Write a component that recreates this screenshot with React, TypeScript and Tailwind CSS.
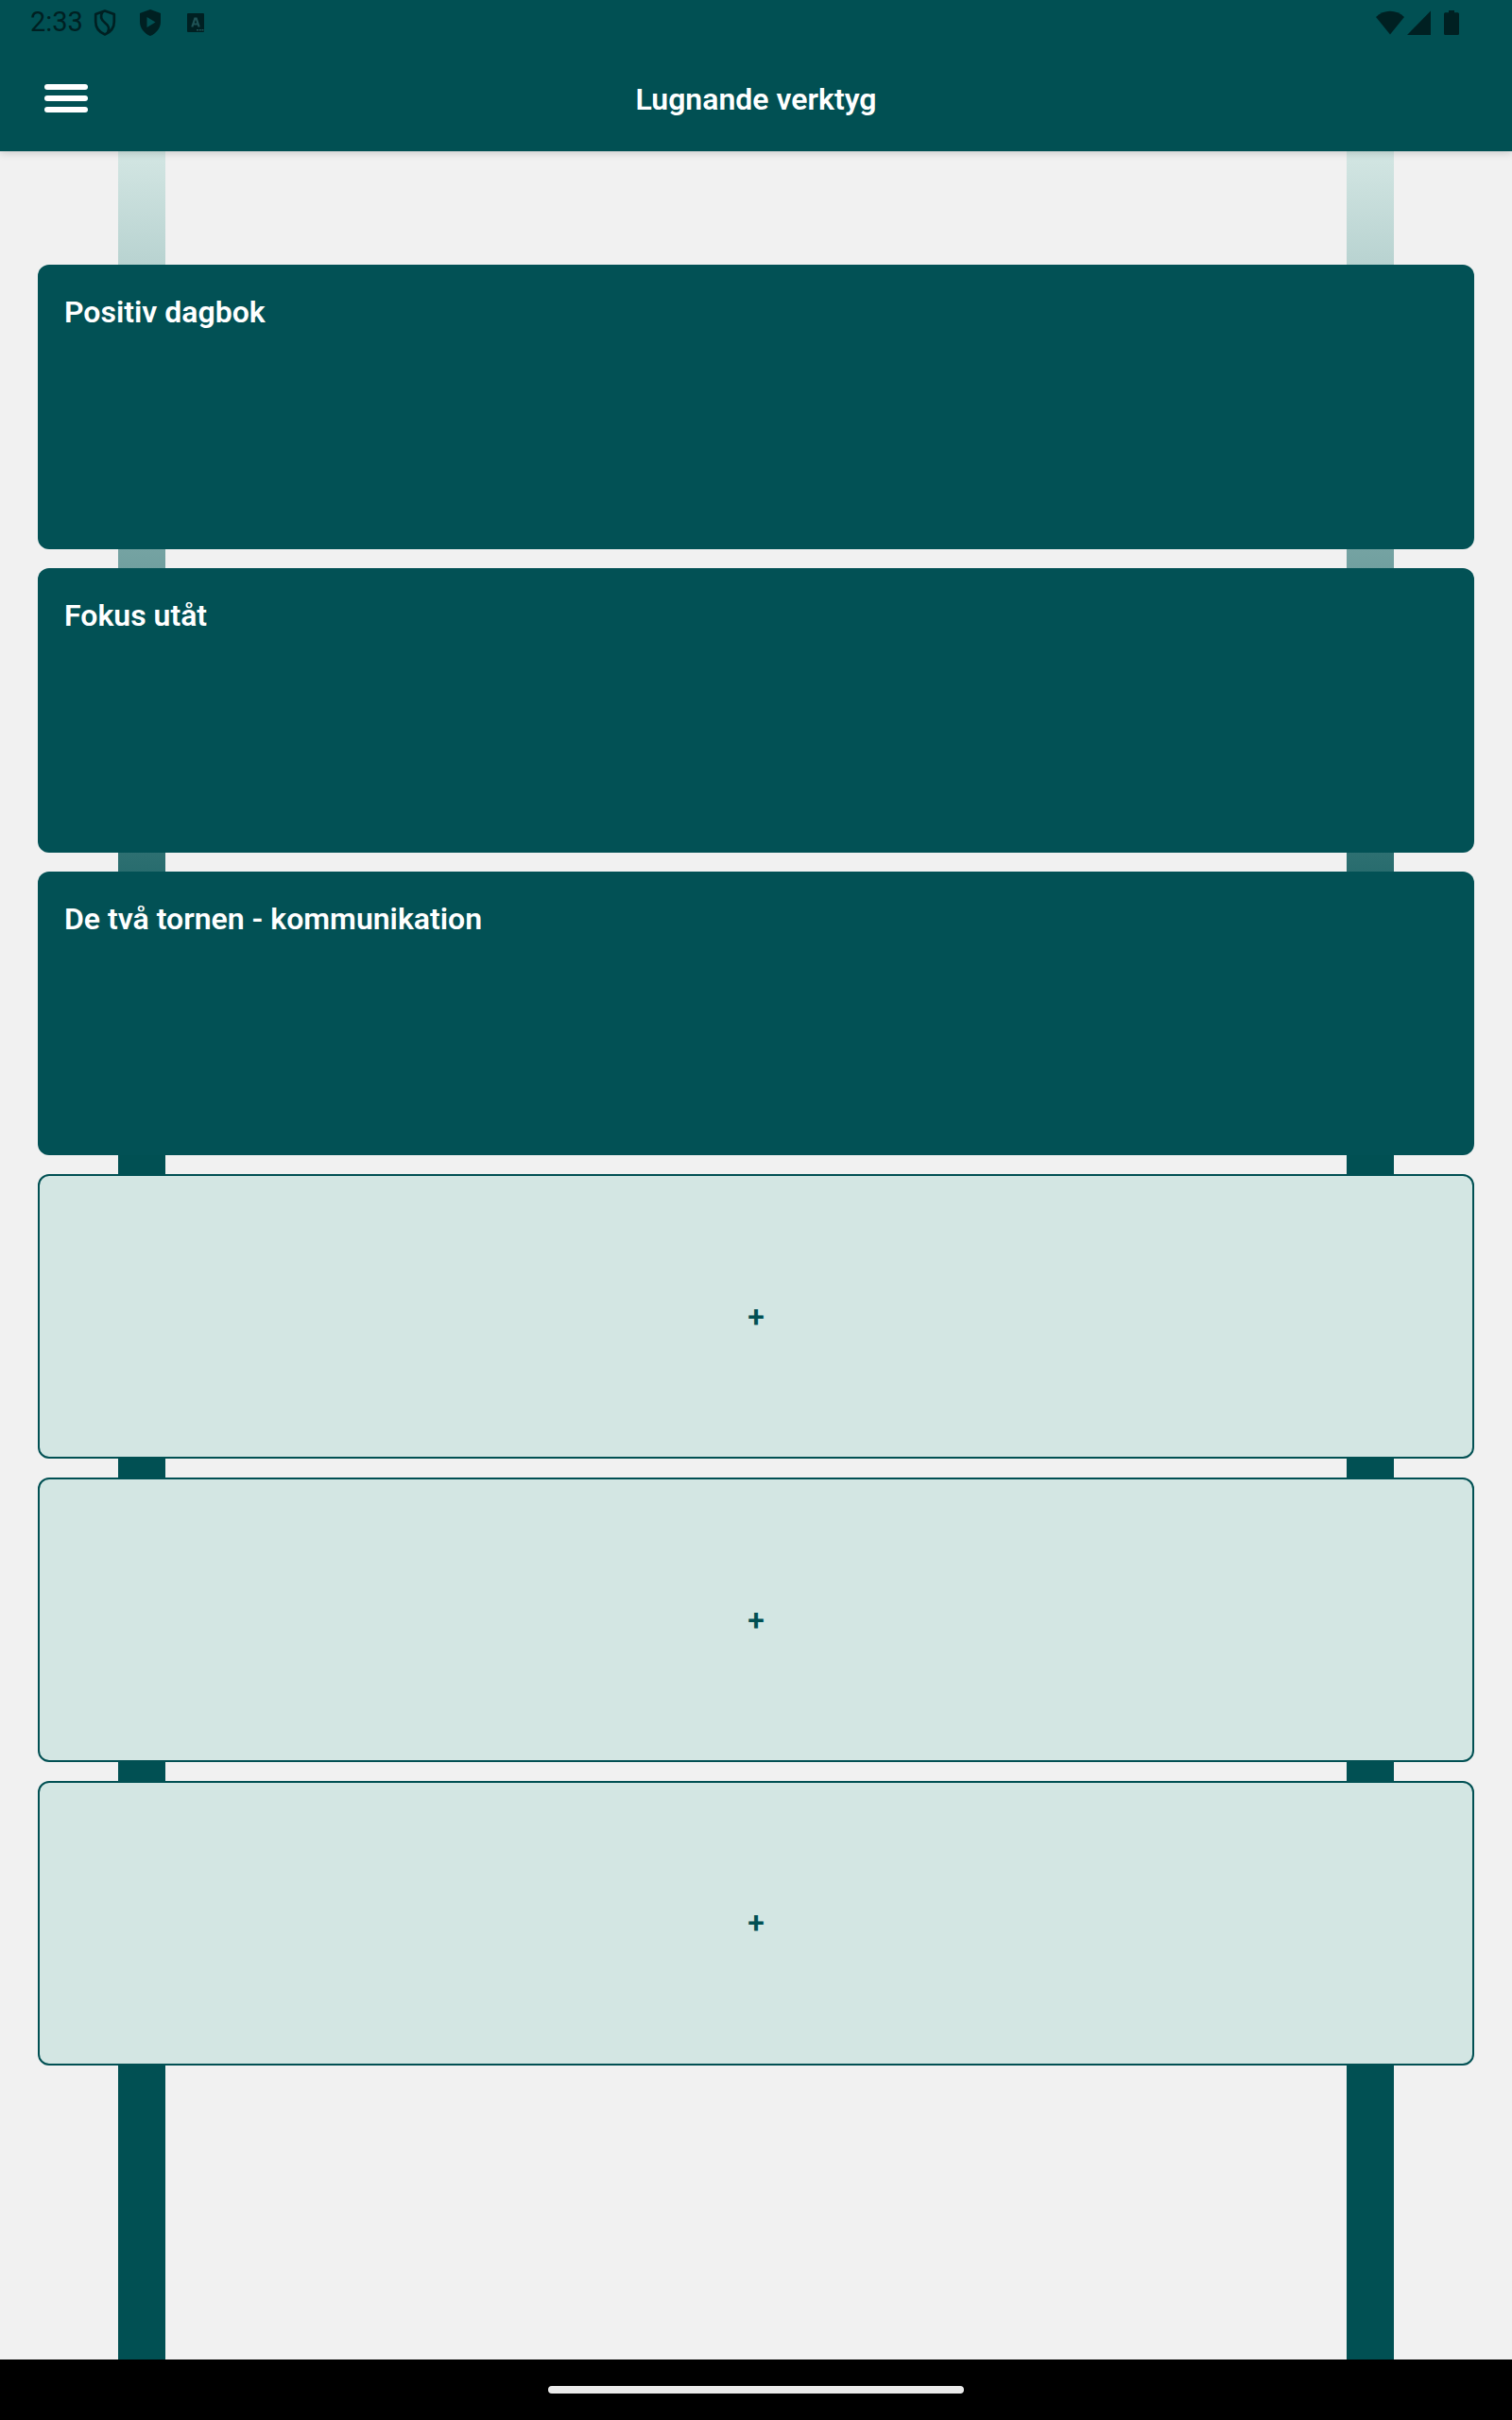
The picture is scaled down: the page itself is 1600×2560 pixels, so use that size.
const tools: (string | null)[] = ["Positiv dagbok", "Fokus utåt", "De två tornen - kommunikation", null, null, null];

function StatusBar() {
  return (
    <div className="flex h-12 items-start justify-between text-[#002022]">
      <div className="flex items-start pl-8">
        <span className="w-[67px] text-[29px] leading-[46px]">2:33</span>
        <svg className="mt-[9px] h-[30px] w-6" viewBox="0 0 24 30" fill="none" stroke="currentColor" strokeWidth="2.7" strokeLinejoin="round">
          <path d="M12 2.500 2.200 6v8c0 6 4 11 9.800 13.500C17.800 25 21.800 20 21.800 14V6Z" />
          <path d="M9.500 3.500C6 9 8.500 12.500 12.500 15.500c4 3 4.500 5.500 2.500 10" />
        </svg>
        <svg className="ml-6 mt-[9px] h-[30px] w-6" viewBox="0 0 24 30" fill="currentColor">
          <path fillRule="evenodd" d="M12 1 1 5v9c0 6.500 4.500 12.500 11 15 6.500-2.500 11-8.500 11-15V5ZM8.500 9v11l9-5.500Z" />
        </svg>
        <svg className="ml-[27px] mt-[14px] h-5 w-[18px]" viewBox="0 0 18 20">
          <rect width="18" height="20" rx="1" fill="currentColor" />
          <path d="M5.300 14.500 8.300 5.500h1.400l3 9M6.500 11.500h5" fill="none" stroke="#1f5356" strokeWidth="2.200" />
          <path d="M10 17h2v1.600h-2zM12.800 17h2v1.600h-2zM15.500 17h2v1.600h-2z" fill="#1f5356" />
        </svg>
      </div>
      <div className="flex items-start pr-14 pt-[11px]">
        <svg className="h-[26px] w-[30px]" viewBox="0 0 30 26" fill="currentColor">
          <path d="M0 7C8.500-1.200 21.500-1.200 30 7L15 25.500Z" />
        </svg>
        <svg className="ml-[3px] h-[26px] w-[25px]" viewBox="0 0 25 26" fill="currentColor">
          <path d="M25 .5V26H0Z" />
        </svg>
        <svg className="ml-[14px] h-[26px] w-4" viewBox="0 0 16 26" fill="currentColor">
          <path d="M5 0h6v2.300h3.500A1.500 1.500 0 0 1 16 3.800v20.700a1.500 1.500 0 0 1-1.500 1.500h-13A1.500 1.500 0 0 1 0 24.500V3.800a1.500 1.500 0 0 1 1.500-1.500H5Z" />
        </svg>
      </div>
    </div>
  );
}

function Header() {
  return (
    <header className="relative z-10 h-40 bg-[#015053] shadow-[0_2px_8px_rgba(0,0,0,0.16)]">
      <StatusBar />
      <div className="grid h-28 grid-cols-[1fr_auto_1fr] items-start px-[47px]">
        <button aria-label="Meny" className="mt-[41px] flex w-[46px] flex-col gap-1.5">
          <span className="h-1.5 rounded-full bg-white" />
          <span className="h-1.5 rounded-full bg-white" />
          <span className="h-1.5 rounded-full bg-white" />
        </button>
        <h1 className="mt-[38px] text-[32px] leading-[38px] font-semibold text-white">Lugnande verktyg</h1>
      </div>
    </header>
  );
}

function ToolCard({ title }: { title: string | null }) {
  return title ? (
    <div className="rounded-xl bg-[#025155] px-7 pt-[31px] text-[32px] leading-[38px] font-semibold text-white">{title}</div>
  ) : (
    <button className="flex items-center justify-center rounded-xl border-2 border-[#015053] bg-[#d3e6e3] text-[32px] leading-[38px] font-semibold text-[#015053]">
      +
    </button>
  );
}

function Rail() {
  return <div className="h-full w-[50px] bg-[linear-gradient(to_bottom,#d3e6e3_0,#015053_940px)]" />;
}

export default function App() {
  return (
    <div className="flex h-[2560px] w-[1600px] flex-col bg-[#f1f1f1] font-['Roboto',sans-serif]">
      <Header />
      <main className="grid h-[2336px]">
        <div className="col-start-1 row-start-1 flex justify-between px-[125px]">
          <Rail />
          <Rail />
        </div>
        <div className="z-[1] col-start-1 row-start-1 mx-10 mt-[120px] grid h-[1904.900px] grid-rows-6 gap-5">
          {tools.map((title, index) => (
            <ToolCard key={index} title={title} />
          ))}
        </div>
      </main>
      <footer className="flex h-16 items-center justify-center bg-black">
        <div className="h-2 w-[440px] rounded-full bg-[#ebebeb]" />
      </footer>
    </div>
  );
}
